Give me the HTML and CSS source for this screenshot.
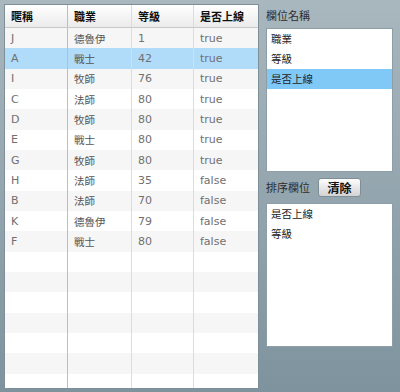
FILE: index.html
```html
<!DOCTYPE html>
<html lang="zh-Hant">
<head>
  <meta charset="UTF-8" />
  <meta name="viewport" content="width=device-width, initial-scale=1.0" />
  <title>排序欄位</title>
  <link rel="stylesheet" href="styles.css">
</head>
<body>
<div class="grid">
  <div class="grid-head">
    <div class="cell">暱稱</div>
    <div class="cell">職業</div>
    <div class="cell">等級</div>
    <div class="cell">是否上線</div>
  </div>
  <div class="grid-body">
    <div class="row"><div class="cell">J</div><div class="cell job">德魯伊</div><div class="cell">1</div><div class="cell">true</div></div>
    <div class="row row-selected"><div class="cell">A</div><div class="cell job">戰士</div><div class="cell">42</div><div class="cell">true</div></div>
    <div class="row"><div class="cell">I</div><div class="cell job">牧師</div><div class="cell">76</div><div class="cell">true</div></div>
    <div class="row"><div class="cell">C</div><div class="cell job">法師</div><div class="cell">80</div><div class="cell">true</div></div>
    <div class="row"><div class="cell">D</div><div class="cell job">牧師</div><div class="cell">80</div><div class="cell">true</div></div>
    <div class="row"><div class="cell">E</div><div class="cell job">戰士</div><div class="cell">80</div><div class="cell">true</div></div>
    <div class="row"><div class="cell">G</div><div class="cell job">牧師</div><div class="cell">80</div><div class="cell">true</div></div>
    <div class="row"><div class="cell">H</div><div class="cell job">法師</div><div class="cell">35</div><div class="cell">false</div></div>
    <div class="row"><div class="cell">B</div><div class="cell job">法師</div><div class="cell">70</div><div class="cell">false</div></div>
    <div class="row"><div class="cell">K</div><div class="cell job">德魯伊</div><div class="cell">79</div><div class="cell">false</div></div>
    <div class="row"><div class="cell">F</div><div class="cell job">戰士</div><div class="cell">80</div><div class="cell">false</div></div>
    <!-- empty filler rows -->
    <div class="row"><div class="cell"></div><div class="cell"></div><div class="cell"></div><div class="cell"></div></div>
    <div class="row"><div class="cell"></div><div class="cell"></div><div class="cell"></div><div class="cell"></div></div>
    <div class="row"><div class="cell"></div><div class="cell"></div><div class="cell"></div><div class="cell"></div></div>
    <div class="row"><div class="cell"></div><div class="cell"></div><div class="cell"></div><div class="cell"></div></div>
    <div class="row"><div class="cell"></div><div class="cell"></div><div class="cell"></div><div class="cell"></div></div>
    <div class="row"><div class="cell"></div><div class="cell"></div><div class="cell"></div><div class="cell"></div></div>
    <div class="row"><div class="cell"></div><div class="cell"></div><div class="cell"></div><div class="cell"></div></div>
  </div>
</div>

<div class="side">
  <div class="side-label">欄位名稱</div>
  <ul class="list-box">
    <li>職業</li>
    <li>等級</li>
    <li class="selected">是否上線</li>
  </ul>

  <div class="sort-bar">
    <span class="side-label">排序欄位</span>
    <button type="button" class="clear-btn">清除</button>
  </div>
  <ul class="list-box">
    <li>是否上線</li>
    <li>等級</li>
  </ul>
</div>
</body>
</html>
```

FILE: styles.css
```css
body {
  margin: 0;
  padding: 4px 7px 0 4px;
  height: 392px;
  box-sizing: border-box;
  display: flex;
  gap: 7px;
  background: linear-gradient(#a9b7be, #7e939e);
  font-family: "DejaVu Sans", "Noto Sans CJK TC", sans-serif;
  font-size: 11px;
  overflow: hidden;
}

.grid {
  width: 255px;
  height: 385px;
  box-sizing: border-box;
  border: 1px solid #7f8f98;
  background-color: #fff;
  display: flex;
  flex-direction: column;
}

.grid-head,
.row {
  display: grid;
  grid-template-columns: 63px 64px 62px 1fr;
}

.grid-head {
  height: 23px;
  box-sizing: border-box;
  border-bottom: 1px solid #c9c9c9;
  background: linear-gradient(#ffffff, #ebebeb);
  font-family: "Noto Sans CJK TC", sans-serif;
  font-weight: bold;
  color: #111;
}

.cell {
  box-sizing: border-box;
  padding-left: 6px;
  border-right: 1px solid #dcdcdc;
  display: flex;
  align-items: center;
  white-space: nowrap;
  overflow: hidden;
}

.cell:first-child {
  border-right-color: #bdbdbd;
}

.cell:last-child {
  border-right: none;
}

.grid-body {
  flex: 1;
  overflow: hidden;
  color: #707070;
}

.row {
  height: 20.34px;
}

.row:nth-child(odd) {
  background-color: #f6f6f6;
}

.row.row-selected {
  background-color: #b0dcfa;
}

.job {
  font-family: "Noto Sans CJK TC", sans-serif;
  font-size: 10.5px;
  color: #555;
}

.side {
  width: 127px;
  display: flex;
  flex-direction: column;
}

.side-label {
  font-family: "Noto Sans CJK TC", sans-serif;
  font-size: 11px;
  color: #2c2c2c;
  line-height: 22px;
}

.list-box {
  list-style: none;
  margin: 2px 0 0;
  padding: 0;
  height: 144px;
  box-sizing: border-box;
  border: 1px solid #8e9ea7;
  background-color: #fff;
  font-family: "Noto Sans CJK TC", sans-serif;
  font-size: 10.5px;
  color: #222;
}

.list-box li {
  height: 20px;
  line-height: 20px;
  padding-left: 4px;
}

.list-box li.selected {
  background-color: #80c9f6;
}

.sort-bar {
  display: flex;
  align-items: center;
  gap: 8px;
  margin-top: 6px;
  margin-bottom: 4px;
}

.sort-bar .side-label {
  line-height: 19px;
}

.clear-btn {
  width: 43px;
  height: 19px;
  padding: 0;
  border: 1px solid #7f8f98;
  border-radius: 3px;
  background: linear-gradient(#fdfdfd, #d3d3d3);
  font-family: "Noto Sans CJK TC", sans-serif;
  font-size: 12px;
  font-weight: bold;
  color: #111;
  line-height: 17px;
  cursor: pointer;
}
```
